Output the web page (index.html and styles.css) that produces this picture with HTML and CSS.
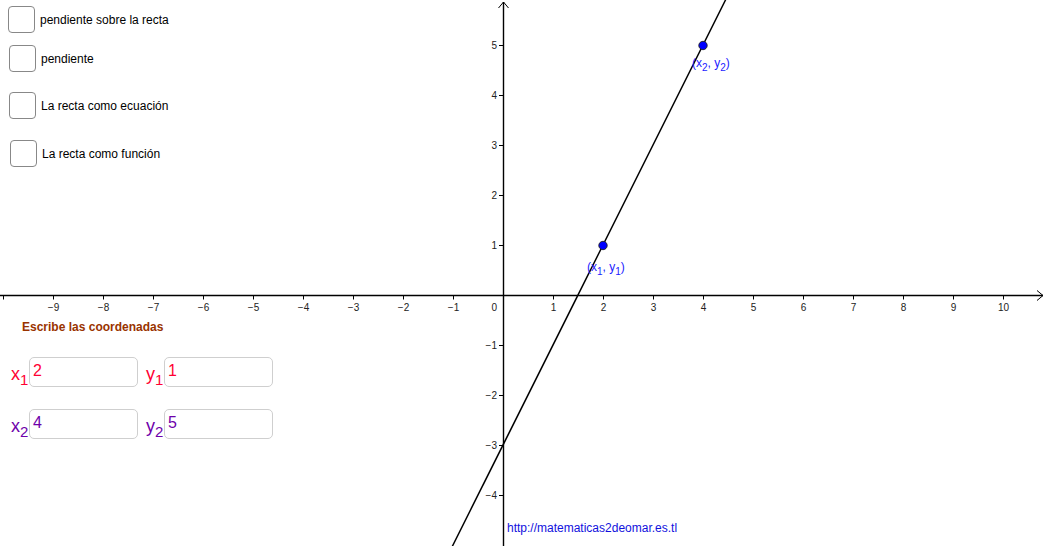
FILE: index.html
```html
<!DOCTYPE html>
<html lang="es">
<head>
<meta charset="utf-8">
<title>Pendiente de una recta</title>
<link rel="stylesheet" href="styles.css">
</head>
<body>
<div class="board">
  <svg class="canvas" width="1046" height="546" viewBox="0 0 1046 546" xmlns="http://www.w3.org/2000/svg">
    <g class="axes" stroke="#000" fill="none">
      <line x1="0" y1="295.5" x2="1043" y2="295.5" stroke-width="1.4"/>
      <polyline points="1037,290.5 1043,295.5 1037,300.5" stroke-width="1"/>
      <line x1="503.5" y1="2" x2="503.5" y2="546" stroke-width="1.4"/>
      <polyline points="498.5,8 503.5,2 508.5,8" stroke-width="1"/>
    </g>
    <g class="ticks" stroke="#000" stroke-width="1">
      <line x1="3.5" y1="295" x2="3.5" y2="299.5"/>
      <line x1="53.5" y1="295" x2="53.5" y2="299.5"/>
      <line x1="103.5" y1="295" x2="103.5" y2="299.5"/>
      <line x1="153.5" y1="295" x2="153.5" y2="299.5"/>
      <line x1="203.5" y1="295" x2="203.5" y2="299.5"/>
      <line x1="253.5" y1="295" x2="253.5" y2="299.5"/>
      <line x1="303.5" y1="295" x2="303.5" y2="299.5"/>
      <line x1="353.5" y1="295" x2="353.5" y2="299.5"/>
      <line x1="403.5" y1="295" x2="403.5" y2="299.5"/>
      <line x1="453.5" y1="295" x2="453.5" y2="299.5"/>
      <line x1="553.5" y1="295" x2="553.5" y2="299.5"/>
      <line x1="603.5" y1="295" x2="603.5" y2="299.5"/>
      <line x1="653.5" y1="295" x2="653.5" y2="299.5"/>
      <line x1="703.5" y1="295" x2="703.5" y2="299.5"/>
      <line x1="753.5" y1="295" x2="753.5" y2="299.5"/>
      <line x1="803.5" y1="295" x2="803.5" y2="299.5"/>
      <line x1="853.5" y1="295" x2="853.5" y2="299.5"/>
      <line x1="903.5" y1="295" x2="903.5" y2="299.5"/>
      <line x1="953.5" y1="295" x2="953.5" y2="299.5"/>
      <line x1="1003.5" y1="295" x2="1003.5" y2="299.5"/>
      <line x1="499" y1="45.5" x2="503" y2="45.5"/>
      <line x1="499" y1="95.5" x2="503" y2="95.5"/>
      <line x1="499" y1="145.5" x2="503" y2="145.5"/>
      <line x1="499" y1="195.5" x2="503" y2="195.5"/>
      <line x1="499" y1="245.5" x2="503" y2="245.5"/>
      <line x1="499" y1="345.5" x2="503" y2="345.5"/>
      <line x1="499" y1="395.5" x2="503" y2="395.5"/>
      <line x1="499" y1="445.5" x2="503" y2="445.5"/>
      <line x1="499" y1="495.5" x2="503" y2="495.5"/>
    </g>
    <g class="xlabels" text-anchor="middle">
      <text x="53.5" y="311">−9</text>
      <text x="103.5" y="311">−8</text>
      <text x="153.5" y="311">−7</text>
      <text x="203.5" y="311">−6</text>
      <text x="253.5" y="311">−5</text>
      <text x="303.5" y="311">−4</text>
      <text x="353.5" y="311">−3</text>
      <text x="403.5" y="311">−2</text>
      <text x="453.5" y="311">−1</text>
      <text x="553.5" y="311">1</text>
      <text x="603.5" y="311">2</text>
      <text x="653.5" y="311">3</text>
      <text x="703.5" y="311">4</text>
      <text x="753.5" y="311">5</text>
      <text x="803.5" y="311">6</text>
      <text x="853.5" y="311">7</text>
      <text x="903.5" y="311">8</text>
      <text x="953.5" y="311">9</text>
      <text x="1003.5" y="311">10</text>
    </g>
    <g class="ylabels" text-anchor="end">
      <text x="497" y="311">0</text>
      <text x="497" y="49">5</text>
      <text x="497" y="99">4</text>
      <text x="497" y="149">3</text>
      <text x="497" y="199">2</text>
      <text x="497" y="249">1</text>
      <text x="497" y="349">−1</text>
      <text x="497" y="399">−2</text>
      <text x="497" y="449">−3</text>
      <text x="497" y="499">−4</text>
    </g>
    <line class="recta" x1="451.5" y1="548" x2="726.5" y2="-2" stroke="#000" stroke-width="1.5"/>
    <circle cx="603" cy="245.5" r="4.2" fill="#0000ff" stroke="#222" stroke-width="0.9"/>
    <circle cx="703" cy="45.5" r="4.2" fill="#0000ff" stroke="#222" stroke-width="0.9"/>
    <text class="ptlabel" x="587" y="271">(x<tspan class="sub" dy="4">1</tspan><tspan dy="-4">, y</tspan><tspan class="sub" dy="4">1</tspan><tspan dy="-4">)</tspan></text>
    <text class="ptlabel" x="692" y="67">(x<tspan class="sub" dy="4">2</tspan><tspan dy="-4">, y</tspan><tspan class="sub" dy="4">2</tspan><tspan dy="-4">)</tspan></text>
    <text class="link" x="507" y="532">http://matematicas2deomar.es.tl</text>
  </svg>

  <div class="widgets">
    <ul class="checks">
      <li class="check c1"><span class="box"></span><span class="lbl">pendiente sobre la recta</span></li>
      <li class="check c2"><span class="box"></span><span class="lbl">pendiente</span></li>
      <li class="check c3"><span class="box"></span><span class="lbl">La recta como ecuación</span></li>
      <li class="check c4"><span class="box"></span><span class="lbl">La recta como función</span></li>
    </ul>

    <section class="coords">
      <h2 class="coords-title">Escribe las coordenadas</h2>
      <div class="coord-row red">
        <span class="var">x<sub>1</sub></span><span class="field">2</span>
        <span class="var var-y">y<sub>1</sub></span><span class="field">1</span>
      </div>
      <div class="coord-row purple">
        <span class="var">x<sub>2</sub></span><span class="field">4</span>
        <span class="var var-y">y<sub>2</sub></span><span class="field">5</span>
      </div>
    </section>
  </div>
</div>
</body>
</html>
```

FILE: styles.css
```css
* {
  box-sizing: border-box;
}

html, body {
  margin: 0;
  padding: 0;
  background: #fff;
}

body {
  font-family: "Liberation Sans", Arial, sans-serif;
  color: #000;
}

.board {
  position: relative;
  width: 1046px;
  height: 546px;
  overflow: hidden;
  background: #fff;
}

.canvas {
  position: absolute;
  left: 0;
  top: 0;
  display: block;
}

.canvas text {
  font-family: "Liberation Sans", Arial, sans-serif;
}

.xlabels text,
.ylabels text {
  font-size: 10px;
  fill: #222;
}

.ptlabel {
  font-size: 12px;
  fill: #2222ff;
}

.ptlabel .sub {
  font-size: 10px;
}

.link {
  font-size: 12px;
  fill: #1111dd;
}

.widgets {
  position: relative;
  display: flex;
  flex-direction: column;
  width: 300px;
}

/* check boxes */
.checks {
  list-style: none;
  margin: 0;
  padding: 6px 0 0 0;
  display: flex;
  flex-direction: column;
}

.check {
  display: flex;
  align-items: center;
  height: 27px;
  font-size: 12px;
}

.c1 { margin-left: 8px; }
.c2 { margin-left: 9px; margin-top: 12px; }
.c3 { margin-left: 9px; margin-top: 20px; }
.c4 { margin-left: 10px; margin-top: 21px; }

.box {
  width: 27px;
  height: 27px;
  border: 1px solid #888;
  border-radius: 4px;
  background: #fff;
  flex: none;
}

.lbl {
  margin-left: 5px;
  white-space: nowrap;
}

/* coordinates */
.coords {
  margin-top: 153px;
  padding-left: 11px;
  display: flex;
  flex-direction: column;
}

.coords-title {
  margin: 0 0 23px 11px;
  font-size: 12px;
  line-height: 14px;
  font-weight: bold;
  color: #993300;
}

.coord-row {
  display: flex;
  align-items: center;
  height: 30px;
}

.coord-row + .coord-row {
  margin-top: 22px;
}

.red { color: #ff0033; }
.purple { color: #6e00aa; }

.var {
  width: 18px;
  font-size: 18px;
  line-height: 20px;
  position: relative;
  top: 2px;
  white-space: nowrap;
}

.var sub {
  font-size: 15px;
  vertical-align: -5px;
  line-height: 0;
}

.var-y {
  margin-left: 8px;
}

.field {
  width: 109px;
  height: 30px;
  border: 1px solid #cfcfcf;
  border-radius: 5px;
  padding: 0 3px;
  font-size: 16px;
  line-height: 26px;
  background: #fff;
}
```
